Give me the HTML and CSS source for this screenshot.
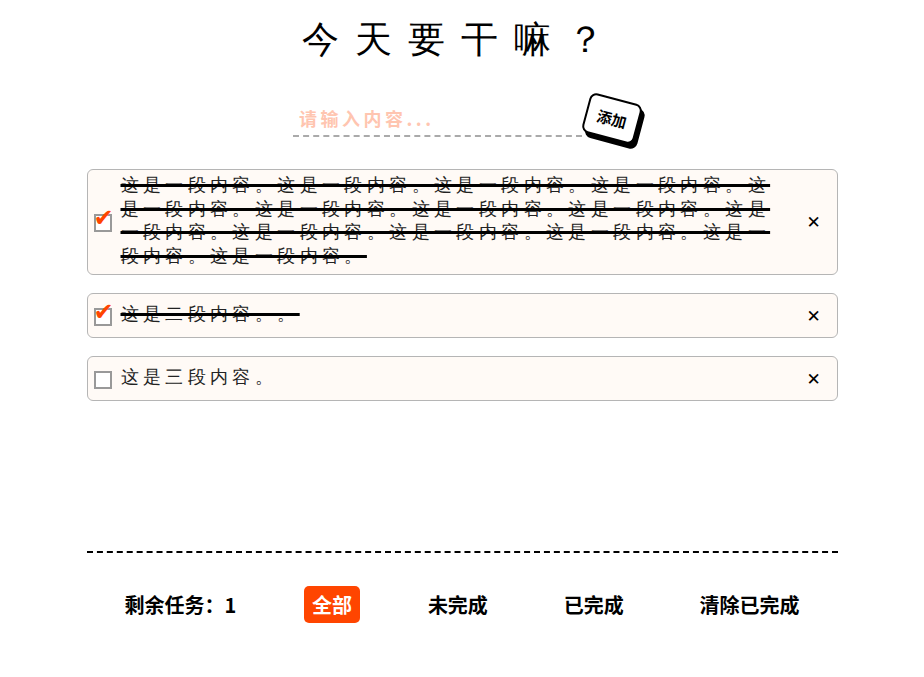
FILE: index.html
```html
<!DOCTYPE html>
<html lang="zh">
<head>
<meta charset="utf-8">
<title>Todo</title>
<link rel="stylesheet" href="styles.css">
</head>
<body>
<div class="app">
  <h1 class="title">今天要干嘛？</h1>
  <div class="add-row">
    <input class="add-input" type="text" placeholder="请输入内容...">
    <button class="add-btn">添加</button>
  </div>
  <ul class="list">
    <li class="item done">
      <span class="check"><span class="tick">✔</span></span>
      <span class="text">这是一段内容。这是一段内容。这是一段内容。这是一段内容。这是一段内容。这是一段内容。这是一段内容。这是一段内容。这是一段内容。这是一段内容。这是一段内容。这是一段内容。这是一段内容。这是一段内容。</span>
      <span class="del">✕</span>
    </li>
    <li class="item done">
      <span class="check"><span class="tick">✔</span></span>
      <span class="text">这是二段内容。。</span>
      <span class="del">✕</span>
    </li>
    <li class="item">
      <span class="check"></span>
      <span class="text">这是三段内容。</span>
      <span class="del">✕</span>
    </li>
  </ul>
  <div class="footer">
    <span class="f-item">剩余任务：1</span>
    <span class="f-item active">全部</span>
    <span class="f-item">未完成</span>
    <span class="f-item">已完成</span>
    <span class="f-item">清除已完成</span>
  </div>
</div>
</body>
</html>
```
FILE: styles.css
```css
* { box-sizing: border-box; }
body {
  margin: 0;
  font-family: serif;
  background: #fff;
}
.app {
  width: 751px;
  margin: 0 auto;
  padding-top: 16px;
}
.title {
  margin: 0;
  text-align: center;
  font-family: serif;
  font-weight: normal;
  font-size: 37px;
  line-height: 48px;
  letter-spacing: 16px;
  padding-right: 2px;
}
.add-row {
  display: flex;
  justify-content: center;
  align-items: flex-start;
  margin-top: 30px;
  padding-left: 8px;
  height: 60px;
}
.add-input {
  width: 289px;
  height: 45px;
  margin-top: -2px;
  border: none;
  border-bottom: 2px dashed #aaa;
  outline: none;
  padding: 8px 6px 0;
  font-size: 18px;
  font-weight: bold;
  letter-spacing: 3.5px;
  font-family: "Noto Sans CJK SC", sans-serif;
  background: transparent;
}
.add-input::placeholder { color: #ffc5b0; }
.add-btn {
  width: 54px;
  height: 41px;
  border: 2px solid #000;
  border-radius: 7px;
  background: #fff;
  box-shadow: 4px 4px 0 #000;
  transform: rotate(15deg);
  font-family: "Noto Sans CJK SC", sans-serif;
  font-weight: bold;
  font-size: 15px;
  padding: 0;
  margin-left: 3px;
  margin-top: 4px;
  color: #000;
}
.list {
  list-style: none;
  margin: 15px 0 0;
  padding: 0;
  height: 382px;
}
.item {
  display: flex;
  align-items: center;
  min-height: 45px;
  padding: 6px 0 6px 6px;
  border: 1px solid #b5b5b5;
  border-radius: 6px;
  background: #fffaf6;
  margin-bottom: 18px;
}
.check {
  flex: none;
  position: relative;
  width: 18px;
  height: 18px;
  border: 2px solid #999;
  background: #fff;
  margin-right: 9px;
  margin-top: 2px;
}
.tick {
  position: absolute;
  left: -2px;
  top: -11px;
  color: #ff4500;
  font-size: 24px;
  font-family: "DejaVu Sans", sans-serif;
  font-weight: bold;
  line-height: 26px;
}
.text {
  flex: none;
  width: 660px;
  font-size: 18px;
  line-height: 23.5px;
  letter-spacing: 4.4px;
  color: #222;
  margin-top: -2px;
}
.done .text {
  text-decoration: line-through;
  text-decoration-thickness: 3px;
  text-decoration-color: #000;
}
.del {
  flex: none;
  margin-left: 26px;
  font-family: "DejaVu Sans", sans-serif;
  font-weight: bold;
  font-size: 17px;
  color: #000;
}
.footer {
  border-top: 2px dashed #000;
  display: flex;
  justify-content: space-around;
  align-items: center;
  padding-top: 33px;
  font-family: "Noto Sans CJK SC", sans-serif;
  font-weight: bold;
  font-size: 20px;
}
.f-item {
  padding: 0 8px;
  height: 37px;
  line-height: 37px;
  border-radius: 5px;
  color: #000;
}
.f-item.active {
  background: #ff4500;
  color: #fff;
}
```
